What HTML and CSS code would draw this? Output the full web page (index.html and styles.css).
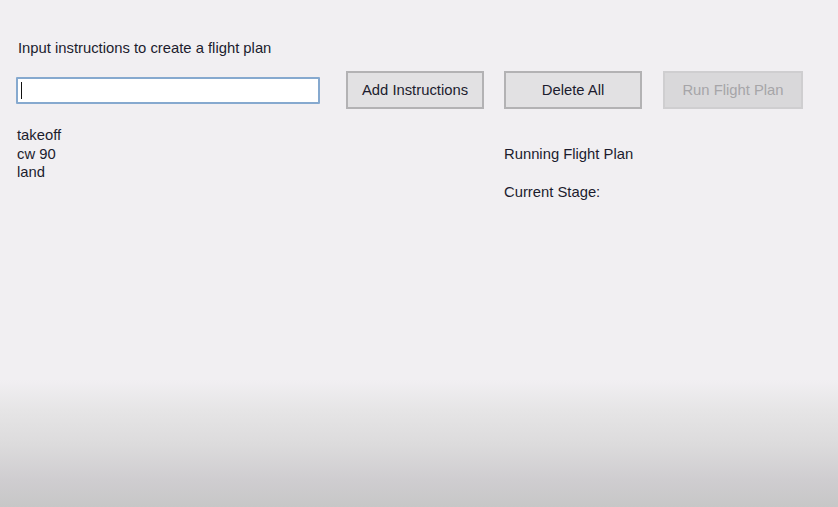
FILE: index.html
```html
<!DOCTYPE html>
<html>
<head>
<meta charset="utf-8">
<link rel="stylesheet" href="styles.css">
</head>
<body>
<div class="app">
  <div class="prompt">Input instructions to create a flight plan</div>
  <div class="controls">
    <div class="input"><span class="caret"></span></div>
    <button class="btn btn-add">Add Instructions</button>
    <button class="btn">Delete All</button>
    <button class="btn btn-disabled">Run Flight Plan</button>
  </div>
  <div class="content">
    <div class="list">
      <div>takeoff</div>
      <div>cw 90</div>
      <div>land</div>
    </div>
    <div class="status">
      <div class="status-title">Running Flight Plan</div>
      <div class="status-stage">Current Stage:</div>
    </div>
  </div>
</div>
</body>
</html>
```

FILE: styles.css
```css
html, body {
  margin: 0;
  padding: 0;
  height: 100%;
}
body {
  background: linear-gradient(to bottom, #f1eff2 0px, #f1eff2 380px, #e6e5e6 410px, #dcdbdc 445px, #cfcdd0 480px, #c7c7c7 507px);
  font-family: "Liberation Sans", Arial, sans-serif;
  font-size: 14.8px;
  color: #1c1c2e;
  overflow: hidden;
}
.app {
  padding: 40px 0 0 17px;
}
.prompt {
  line-height: 16px;
  height: 16px;
  margin-left: 1px;
}
.controls {
  display: flex;
  align-items: center;
  margin-top: 15px;
  height: 38px;
}
.input {
  width: 297px;
  height: 23px;
  margin-left: -1px;
  background: #ffffff;
  border: 2px solid #86a9cf;
  border-radius: 1px;
  display: flex;
  align-items: center;
  padding-left: 3px;
  box-sizing: content-box;
}
.caret {
  display: block;
  width: 1px;
  height: 17px;
  background: #111;
}
.btn {
  width: 138px;
  height: 38px;
  margin: 0;
  padding: 0;
  background: #e2e1e3;
  border: 2px solid #b3b2b4;
  border-radius: 0;
  font-family: "Liberation Sans", Arial, sans-serif;
  font-size: 14.8px;
  color: #1c1c2e;
  margin-left: 20px;
}
.btn-add {
  margin-left: 26px;
}
.btn-disabled {
  margin-left: 21px;
  width: 140px;
  background: #d9d8da;
  border-color: #cfced0;
  color: #a6a5a8;
}
.content {
  display: flex;
  margin-top: 17px;
}
.list {
  width: 487px;
  line-height: 18.5px;
}
.status {
  padding-top: 19px;
  line-height: 18px;
}
.status-stage {
  margin-top: 20px;
}
```
